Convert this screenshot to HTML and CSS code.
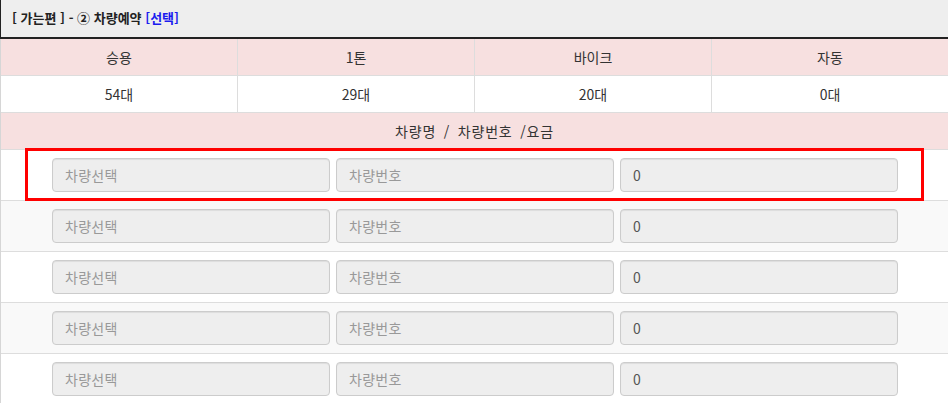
FILE: index.html
```html
<!DOCTYPE html>
<html lang="ko">
<head>
<meta charset="utf-8">
<title>차량예약</title>
<link rel="stylesheet" href="styles.css">
</head>
<body>
<div class="panel">
  <div class="panel-title">[ 가는편 ] - ② 차량예약 <span class="pick">[선택]</span></div>
  <div class="grid">
    <div class="row head cols4">
      <div class="cell">승용</div>
      <div class="cell">1톤</div>
      <div class="cell">바이크</div>
      <div class="cell">자동</div>
    </div>
    <div class="row cols4">
      <div class="cell">54대</div>
      <div class="cell">29대</div>
      <div class="cell">20대</div>
      <div class="cell">0대</div>
    </div>
    <div class="row head">
      <div class="cell wide">차량명 / 차량번호 /요금</div>
    </div>
    <div class="row inputs">
      <div class="field ph">차량선택</div><div class="field ph">차량번호</div><div class="field val">0</div>
    </div>
    <div class="row inputs stripe">
      <div class="field ph">차량선택</div><div class="field ph">차량번호</div><div class="field val">0</div>
    </div>
    <div class="row inputs">
      <div class="field ph">차량선택</div><div class="field ph">차량번호</div><div class="field val">0</div>
    </div>
    <div class="row inputs stripe">
      <div class="field ph">차량선택</div><div class="field ph">차량번호</div><div class="field val">0</div>
    </div>
    <div class="row inputs">
      <div class="field ph">차량선택</div><div class="field ph">차량번호</div><div class="field val">0</div>
    </div>
  </div>
  <div class="highlight"></div>
</div>
</body>
</html>
```

FILE: styles.css
```css
html, body {
  margin: 0;
  padding: 0;
  background: #fff;
}
body {
  font-family: "Noto Sans CJK KR", "Noto Sans", sans-serif;
  font-size: 14px;
  line-height: 20px;
  color: #333;
  width: 948px;
  overflow: hidden;
}
.panel {
  position: relative;
}
.panel-title {
  height: 39px;
  box-sizing: border-box;
  padding: 9px 0 0 11px;
  background: #eeeeee;
  border-left: 1px solid #222;
  border-bottom: 2px solid #222;
  font-size: 13px;
  font-weight: bold;
  line-height: 18px;
  color: #222;
}
.pick {
  color: #1b1bef;
}
.grid {
  border-left: 1px solid #d6d6d6;
}
.row {
  display: flex;
  border-bottom: 1px solid #ddd;
  background: #fff;
}
.row.head {
  background: #f7e0e0;
}
.row.stripe {
  background: #f9f9f9;
}
.cell {
  flex: 1;
  padding: 8px;
  text-align: center;
  border-left: 1px solid #ddd;
}
.cell:first-child {
  border-left: 0;
}
.cell.wide {
  word-spacing: 3px;
  letter-spacing: 0.8px;
}
.cols4 .cell {
  flex: 0 0 237px;
  box-sizing: border-box;
}
.cols4 .cell:first-child {
  flex-basis: 236px;
}
.inputs {
  padding: 8px 0 8px 51px;
  gap: 6px;
}
.field {
  width: 278px;
  height: 34px;
  box-sizing: border-box;
  padding: 6px 12px;
  border: 1px solid #ccc;
  border-radius: 4px;
  background: #eeeeee;
  box-shadow: inset 0 1px 1px rgba(0,0,0,0.075);
  font-size: 14px;
  line-height: 20px;
  letter-spacing: 0.3px;
}
.field.ph {
  color: #999;
}
.field.val {
  color: #555;
}
.highlight {
  position: absolute;
  left: 25px;
  top: 148px;
  width: 893px;
  height: 47px;
  border: 3px solid #ff0000;
  pointer-events: none;
}
```
